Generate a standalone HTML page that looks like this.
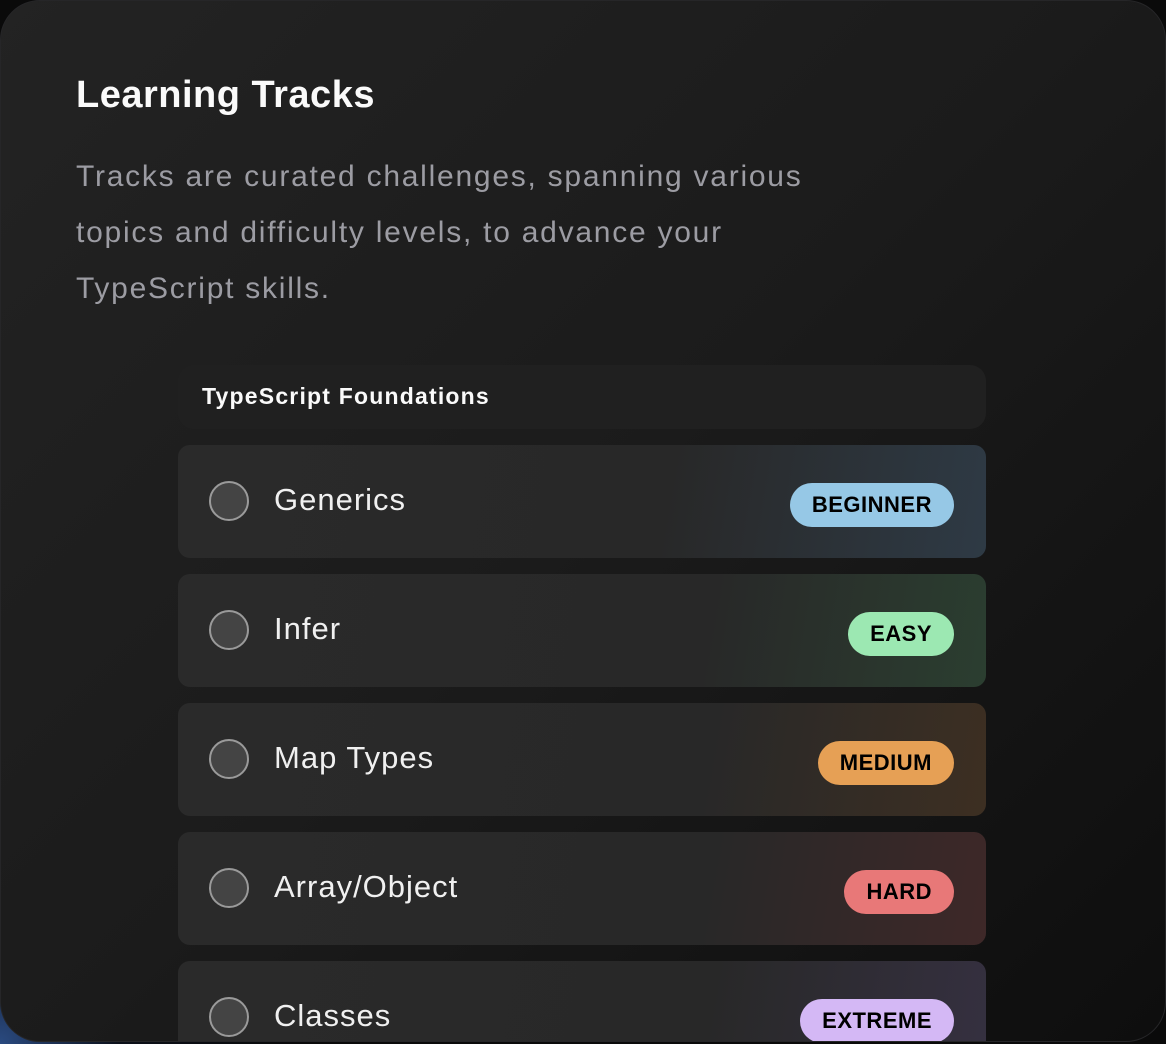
<!DOCTYPE html>
<html><head><style>
html,body{margin:0;width:1166px;height:1044px;overflow:hidden;background:radial-gradient(circle at 0 1044px,#2a4a80 0,#0b0f18 120px,#0a0a0a 300px);font-family:"Liberation Sans",sans-serif;}
.card{position:absolute;left:0;top:0;width:1164px;height:1040px;border-radius:40px;border:1px solid #262628;background:linear-gradient(135deg,#232323 0%,#1b1b1b 50%,#0e0e0e 100%);overflow:hidden;}
h1{position:absolute;left:75px;top:73px;margin:0;font-size:38px;font-weight:bold;color:#fafafa;letter-spacing:0.5px;}
p{position:absolute;left:75px;top:148px;margin:0;font-size:30px;line-height:56px;color:#9c9ca3;letter-spacing:1.75px;}
.hdr{position:absolute;left:177px;top:364px;width:808px;height:64px;border-radius:16px;background:#202020;}
.hdr span{position:absolute;left:24px;top:18px;font-size:23px;font-weight:bold;color:#fafafa;letter-spacing:1.2px;}
.row{position:absolute;left:177px;width:808px;height:113px;border-radius:12px;}
.circ{position:absolute;top:36px;width:36px;height:36px;border-radius:50%;border:2px solid #9a9a9a;background:#444;left:31px;}
.lbl{position:absolute;left:96px;top:37px;font-size:31px;color:#f0f0f0;letter-spacing:1px;}
.b{position:absolute;right:32px;top:38px;height:44px;line-height:44px;border-radius:22px;padding:0 22px;font-size:22px;font-weight:bold;color:#000;letter-spacing:0.5px;}
</style></head><body>
<div class="card">
<h1>Learning Tracks</h1>
<p>Tracks are curated challenges, spanning various<br>topics and difficulty levels, to advance your<br>TypeScript skills.</p>
<div class="hdr"><span>TypeScript Foundations</span></div>
<div class="row" style="top:444px;background:linear-gradient(100deg,#2a2a2a 0%,#282828 60%,#2e3a45 100%)"><div class="circ"></div><div class="lbl">Generics</div><div class="b" style="background:#96c8e6">BEGINNER</div></div>
<div class="row" style="top:573px;background:linear-gradient(100deg,#2a2a2a 0%,#282828 65%,#2b3e30 100%)"><div class="circ"></div><div class="lbl">Infer</div><div class="b" style="background:#9ce8b2">EASY</div></div>
<div class="row" style="top:702px;background:linear-gradient(100deg,#2a2a2a 0%,#282828 65%,#3d2f22 100%)"><div class="circ"></div><div class="lbl">Map Types</div><div class="b" style="background:#e6a055">MEDIUM</div></div>
<div class="row" style="top:831px;background:linear-gradient(100deg,#2a2a2a 0%,#282828 65%,#3e2828 100%)"><div class="circ"></div><div class="lbl">Array/Object</div><div class="b" style="background:#e87878">HARD</div></div>
<div class="row" style="top:960px;background:linear-gradient(100deg,#2a2a2a 0%,#282828 65%,#353040 100%)"><div class="circ"></div><div class="lbl">Classes</div><div class="b" style="background:#d4b8f5">EXTREME</div></div>
</div>
</body></html>
